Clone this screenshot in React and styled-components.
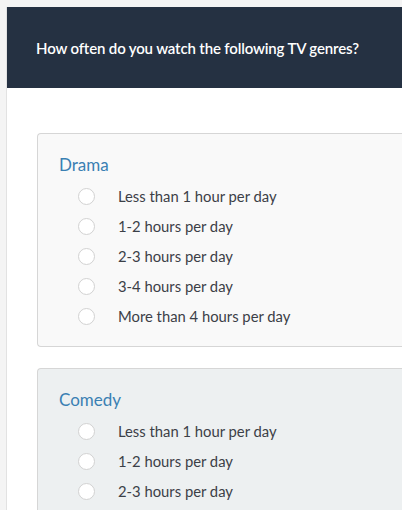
import React from 'react';
import styled, { createGlobalStyle } from 'styled-components';

const GlobalStyle = createGlobalStyle`
  html, body {
    margin: 0;
    padding: 0;
    background: #f4f4f4;
    font-family: Lato, "Open Sans", sans-serif;
  }
  * { box-sizing: border-box; }
`;

const Wrapper = styled.div`
  padding: 7px 0 0 6px;
  height: 510px;
  overflow: hidden;
`;

const Page = styled.div`
  background: #ffffff;
  border-left: 1px solid #e2e2e2;
  min-height: 503px;
`;

const Header = styled.header`
  height: 81px;
  background: #253142;
  display: flex;
  align-items: center;
  padding-left: 29px;
`;

const Title = styled.h1`
  margin: 0;
  color: #ffffff;
  font-size: 15px;
  font-weight: 600;
  letter-spacing: -0.15px;
`;

const Content = styled.div`
  padding: 45px 0 0 30px;
  display: flex;
  flex-direction: column;
  gap: 21px;
`;

const Card = styled.section`
  background: ${(p) => (p.alt ? '#edf0f1' : '#f9f9f9')};
  border: 1px solid #d6d6d6;
  border-right: none;
  border-radius: 4px 0 0 4px;
  padding: 18px 0 15px 21px;
`;

const Genre = styled.h2`
  margin: 0 0 3px;
  font-size: 17px;
  font-weight: 400;
  line-height: 26px;
  color: #3a80b3;
`;

const Option = styled.label`
  display: flex;
  align-items: center;
  height: 30px;
  padding-left: 19px;
  gap: 23px;
  font-size: 14.8px;
  color: #3c4047;
  cursor: pointer;
`;

const Radio = styled.span`
  width: 17px;
  height: 17px;
  border-radius: 50%;
  border: 1px solid #d2d2d2;
  background: #ffffff;
  flex-shrink: 0;
`;

const options = [
  'Less than 1 hour per day',
  '1-2 hours per day',
  '2-3 hours per day',
  '3-4 hours per day',
  'More than 4 hours per day',
];

const genres = ['Drama', 'Comedy'];

export default function App() {
  return (
    <>
      <GlobalStyle />
      <Wrapper>
        <Page>
          <Header>
            <Title>How often do you watch the following TV genres?</Title>
          </Header>
          <Content>
            {genres.map((g, i) => (
              <Card key={g} alt={i % 2 === 1}>
                <Genre>{g}</Genre>
                {options.map((o) => (
                  <Option key={o}>
                    <Radio />
                    {o}
                  </Option>
                ))}
              </Card>
            ))}
          </Content>
        </Page>
      </Wrapper>
    </>
  );
}
